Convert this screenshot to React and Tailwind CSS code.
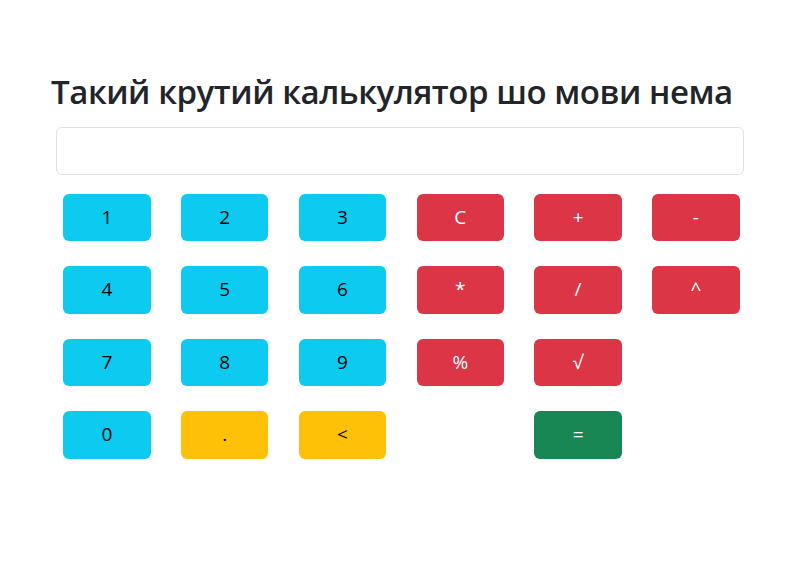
import React from "react";

const info = "bg-[#0dcaf0] text-[#000]";
const danger = "bg-[#dc3545] text-white";
const warning = "bg-[#ffc107] text-[#000]";
const success = "bg-[#198754] text-white";

const buttons = [
  ["1", info], ["2", info], ["3", info], ["C", danger], ["+", danger], ["-", danger],
  ["4", info], ["5", info], ["6", info], ["*", danger], ["/", danger], ["^", danger],
  ["7", info], ["8", info], ["9", info], ["%", danger], ["√", danger], null,
  ["0", info], [".", warning], ["<", warning], null, ["=", success], null,
];

export default function App() {
  return (
    <div className="w-[800px] h-[566px] bg-white" style={{ fontFamily: '"Open Sans", "Noto Sans", sans-serif' }}>
      <div className="pt-[72px] pl-[51px]">
        <h1 className="text-[33px] leading-[1.2] font-semibold text-[#212529] tracking-[-0.45px]">
          Такий крутий калькулятор шо мови нема
        </h1>
      </div>
      <div className="mt-[15px] ml-[56px] w-[688px]">
        <input
          type="text"
          className="w-full h-[48px] border border-[#dee2e6] rounded-[6px] bg-white px-3 outline-none"
        />
      </div>
      <div className="mt-[19px] ml-[48px] grid grid-cols-[repeat(6,117.8px)] gap-y-[25px]">
        {buttons.map((b, i) =>
          b ? (
            <div key={i} className="flex justify-center">
              <button
                className={`w-[87.5px] h-[47.5px] rounded-[6px] text-[19px] leading-none flex items-center justify-center ${b[1]}`}
              >
                {b[0]}
              </button>
            </div>
          ) : (
            <div key={i} />
          )
        )}
      </div>
    </div>
  );
}
